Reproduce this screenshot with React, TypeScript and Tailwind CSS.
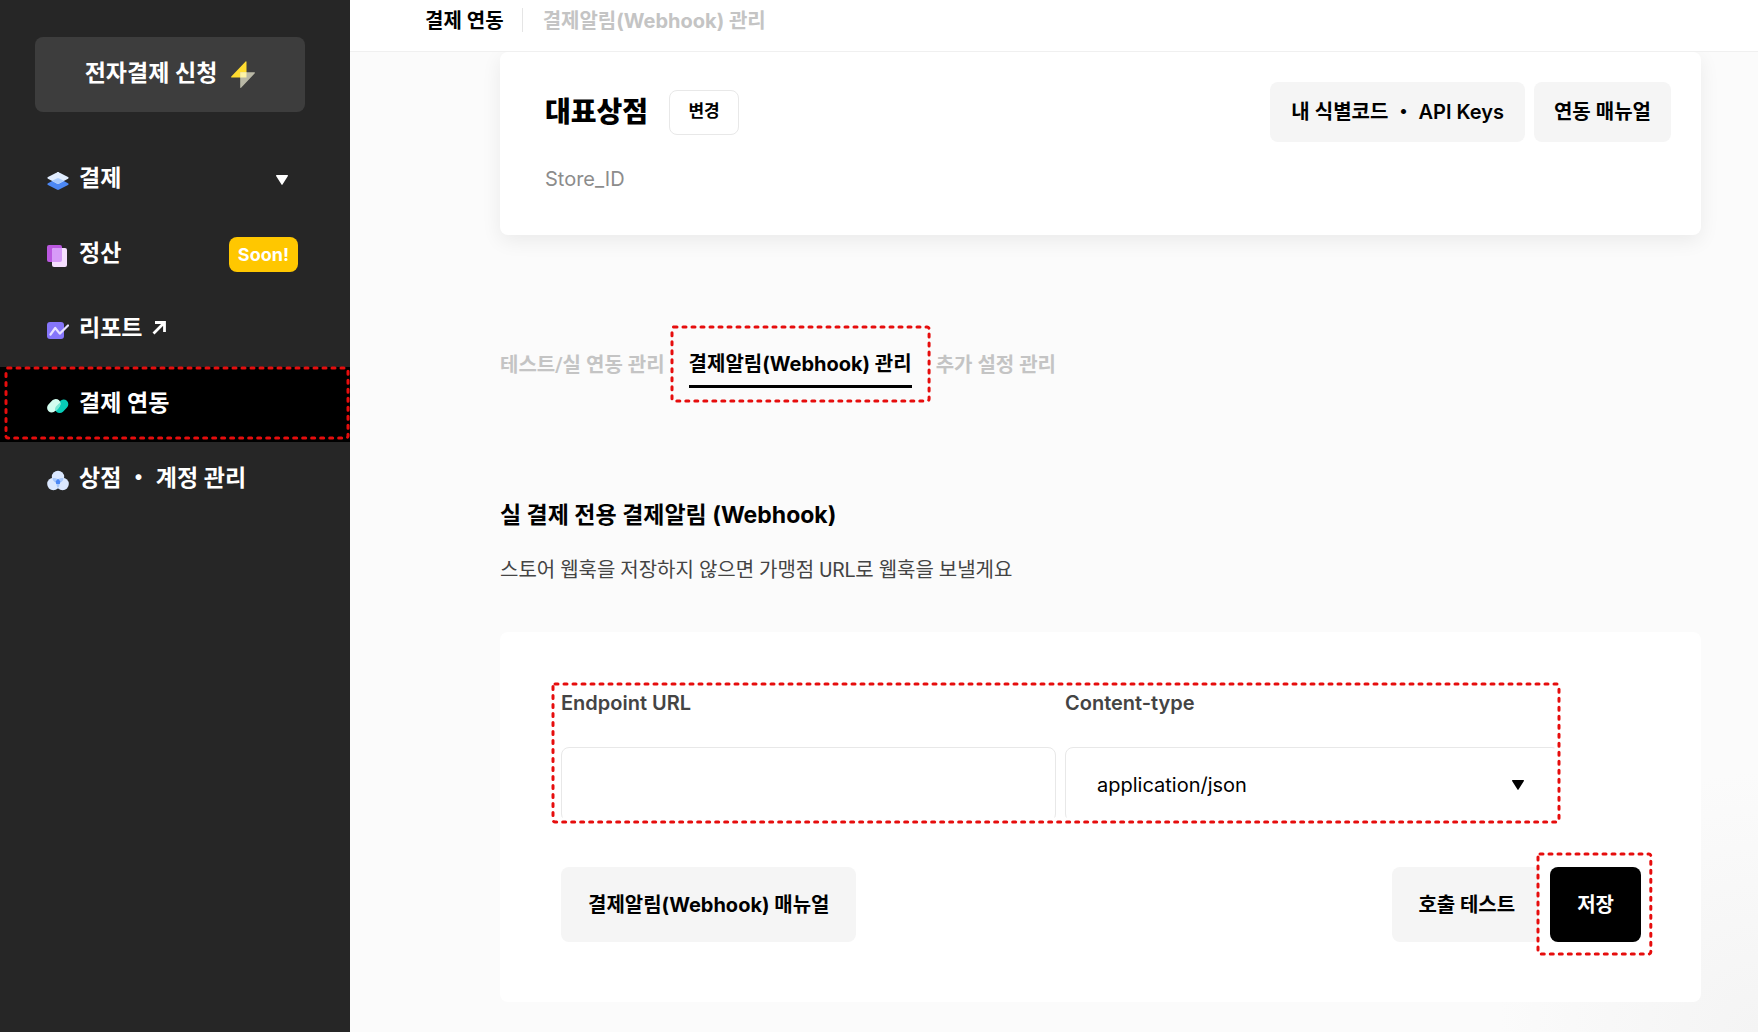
import { ReactNode } from "react";
import clsx from "clsx";

interface HighlightProps {
  className: string;
  fill?: string;
  halo?: boolean;
}

// Dashed red marker laid over (or behind) the thing it points at
function Highlight({ className, fill = "none", halo }: HighlightProps) {
  return (
    <div className={clsx("absolute pointer-events-none", className)} aria-hidden="true">
      <svg className="block h-full w-full overflow-visible">
        {halo && (
          <rect width="100%" height="100%" rx="3" fill="none" stroke="#ffffff" strokeWidth="9" />
        )}
        <rect
          width="100%"
          height="100%"
          rx="2"
          fill={fill}
          stroke="#e60d0d"
          strokeWidth="3"
          strokeLinecap="round"
          strokeDasharray="3 6"
        />
      </svg>
    </div>
  );
}

function Triangle({ className }: { className?: string }) {
  return (
    <svg viewBox="0 0 12 10" className={clsx("h-[10px] w-3", className)} fill="currentColor" aria-hidden="true">
      <path d="M0.6 0h10.8c.5 0 .7.5.5.9L6.5 9.6c-.2.4-.8.4-1 0L.1.9C-.1.5.1 0 .6 0z" />
    </svg>
  );
}

function BoltIcon() {
  return (
    <svg viewBox="0 0 24 27" className="h-[27px] w-6" aria-hidden="true">
      <path d="M14.6 0.4c.3-.4.9-.2.9.3V16.5H.7c-.6 0-.8-.6-.4-1z" fill="#ffdc30" />
      <path d="M9.2 11.2h14.2c.6 0 .8.6.4 1L10.1 26.7c-.3.4-.9.2-.9-.3z" fill="#b9b8a6" />
      <path d="M9.2 11.2h6.3v5.3H9.2z" fill="#fdf3a4" />
    </svg>
  );
}

function LayersIcon() {
  return (
    <svg viewBox="0 0 22 22" className="size-[22px]" aria-hidden="true">
      <path d="M1 13.3l8.8-4.7c.8-.4 1.6-.4 2.4 0l8.8 4.7c.9.5.9 1.1 0 1.6l-8.8 4.7c-.8.4-1.6.4-2.4 0L1 14.9c-.9-.5-.9-1.1 0-1.6z" fill="#4c88f5" />
      <path d="M1 7.1l8.8-4.7c.8-.4 1.6-.4 2.4 0L21 7.1c.9.5.9 1.1 0 1.6l-8.8 4.7c-.8.4-1.6.4-2.4 0L1 8.7c-.9-.5-.9-1.1 0-1.6z" fill="#e1edff" />
      <path d="M5 10.8l4.8-2.2c.8-.4 1.6-.4 2.4 0L17 10.8l-4.8 2.6c-.8.4-1.6.4-2.4 0z" fill="#a9cbfd" />
    </svg>
  );
}

function CardsIcon() {
  return (
    <svg viewBox="0 0 22 22" className="size-[22px]" aria-hidden="true">
      <rect x="0" y="0" width="15" height="17" rx="2" fill="#bb58e0" />
      <rect x="5" y="3" width="15" height="19" rx="2" fill="#f6dfff" />
      <path d="M5 5a2 2 0 0 1 2-2h8v12a2 2 0 0 1-2 2H5z" fill="#d79bf8" />
    </svg>
  );
}

function ReportIcon() {
  return (
    <svg viewBox="0 0 22 22" className="size-[22px]" aria-hidden="true">
      <rect x="0" y="2" width="17" height="17" rx="3" fill="#8575fa" />
      <path
        d="M3.5 14.5L8.2 8l4.6 5.6L21 5.5"
        fill="none"
        stroke="#e6e0ff"
        strokeWidth="2.2"
        strokeLinecap="round"
        strokeLinejoin="round"
      />
    </svg>
  );
}

function LinkIcon() {
  return (
    <svg viewBox="0 0 22 22" className="size-[22px]" aria-hidden="true">
      <g fill="none" strokeLinecap="round">
        <path d="M12.6 13.4l4-4.2" stroke="#07cdb8" strokeWidth="9.4" />
        <path d="M4.8 12.8l4-4.2" stroke="#d2fdf0" strokeWidth="9.4" />
      </g>
      <path d="M8 14.600c0-3.200 2.800-5 5.400-7.200.6 2.800-.8 5-4.400 8.600-.6-.2-1-.8-1-1.400z" fill="#7be8d5" />
    </svg>
  );
}

function CirclesIcon() {
  return (
    <svg viewBox="0 0 22 22" className="size-[22px]" aria-hidden="true">
      <circle cx="11" cy="7" r="6.200" fill="#dbe8ff" />
      <circle cx="6.400" cy="14" r="6.200" fill="#dbe8ff" />
      <circle cx="15.600" cy="14" r="6.200" fill="#dbe8ff" />
      <path d="M5.300 8.500c2.500-1 5 0 5.700 1.500.7-1.500 3.200-2.500 5.700-1.500-1 3-3 4.300-4.300 4.300.3 2 0 3.700-1.400 5.200-1.400-1.500-1.700-3.200-1.400-5.200-1.300 0-3.300-1.300-4.300-4.300z" fill="#a8c8fb" />
      <path d="M11 8.800l2.300 2.500-.5 2.700H9.200l-.5-2.700z" fill="#4c88f5" />
    </svg>
  );
}

function ExternalArrow() {
  return (
    <svg viewBox="0 0 14 14" className="size-[14px]" aria-hidden="true">
      <path d="M1.5 12.5L12 2M3 1.500h9.500V11" fill="none" stroke="currentColor" strokeWidth="2.800" />
    </svg>
  );
}

interface MenuItem {
  label: string;
  icon: ReactNode;
  extra?: ReactNode;
  external?: boolean;
  active?: boolean;
}

const MENU: MenuItem[] = [
  { label: "결제", icon: <LayersIcon />, extra: <Triangle className="mr-2.5" /> },
  {
    label: "정산",
    icon: <CardsIcon />,
    extra: (
      <span className="block rounded-lg bg-[#ffc700] px-[9px] font-['Inter',sans-serif] text-lg leading-[35px] font-bold">
        Soon!
      </span>
    ),
  },
  { label: "리포트", icon: <ReportIcon />, external: true },
  { label: "결제 연동", icon: <LinkIcon />, active: true },
  { label: "상점 ・ 계정 관리", icon: <CirclesIcon /> },
];

function Sidebar() {
  return (
    <aside className="w-[350px] shrink-0 bg-[#262626] pt-[37px] font-['Roboto','Noto_Sans_CJK_KR',sans-serif] text-white">
      <div className="pr-[45px] pl-[35px]">
        <button
          type="button"
          className="flex h-[75px] w-full items-center justify-center gap-3.5 rounded-lg bg-[#3d3d3d] text-[23px] font-bold"
        >
          전자결제 신청
          <BoltIcon />
        </button>
      </div>
      <nav className="mt-[30px]">
        {MENU.map((item) => (
          <a
            key={item.label}
            href="#"
            className={clsx(
              "relative flex h-[75px] items-center pr-[52px] pl-[47px] text-[23px] font-bold",
              item.active && "bg-black"
            )}
          >
            <span className="mt-0.5">{item.icon}</span>
            <span className="ml-2.5">{item.label}</span>
            {item.external && (
              <span className="mb-1 ml-2.5">
                <ExternalArrow />
              </span>
            )}
            {item.extra && <span className="ml-auto">{item.extra}</span>}
            {item.active && <Highlight className="top-px right-0.5 bottom-1 left-1.5" />}
          </a>
        ))}
      </nav>
    </aside>
  );
}

function GrayButton({ children, className }: { children: ReactNode; className: string }) {
  return (
    <button type="button" className={clsx("rounded-lg bg-[#f5f5f5] text-xl", className)}>
      {children}
    </button>
  );
}

function StoreCard() {
  return (
    <section className="flex h-[183px] items-start justify-between rounded-lg bg-white pt-[30px] pr-[30px] pl-[45px] shadow-[0_6px_20px_rgba(0,0,0,0.07)]">
      <div>
        <div className="flex h-[60px] items-center gap-[21px]">
          <h1 className="text-[28px] font-extrabold">대표상점</h1>
          <button
            type="button"
            className="h-[45px] w-[70px] rounded-lg border border-[#e8e8e8] bg-white text-[17px] font-semibold"
          >
            변경
          </button>
        </div>
        <p className="mt-[23px] text-xl text-[#8c8c8c]">Store_ID</p>
      </div>
      <div className="flex gap-[9px]">
        <GrayButton className="h-[60px] px-[21px] font-semibold">내 식별코드 ・ API Keys</GrayButton>
        <GrayButton className="h-[60px] px-5 font-semibold">연동 매뉴얼</GrayButton>
      </div>
    </section>
  );
}

function Tabs() {
  return (
    <div className="mt-[110px] flex gap-6 text-xl font-bold text-[#c4c4c4]">
      <button type="button" className="h-[43px] pb-1 font-['Roboto','Noto_Sans_CJK_KR',sans-serif]">
        테스트/실 연동 관리
      </button>
      <div className="relative">
        <button type="button" className="h-[43px] border-b-3 border-black pb-0.5 text-black">
          결제알림(Webhook) 관리
        </button>
        <Highlight className="-inset-x-[17px] -top-[18px] -bottom-[13px]" />
      </div>
      <button type="button" className="h-[43px] pb-1 font-['Roboto','Noto_Sans_CJK_KR',sans-serif]">
        추가 설정 관리
      </button>
    </div>
  );
}

function WebhookForm() {
  return (
    <form className="mt-12 rounded-lg bg-white pt-[54px] pr-[60px] pb-[60px] pl-[61px]">
      <div className="relative mr-[81px] grid grid-cols-2 gap-[9px]">
        <div>
          <label htmlFor="endpoint" className="block text-xl leading-[34px] font-semibold text-[#444]">
            Endpoint URL
          </label>
          <input
            id="endpoint"
            type="text"
            className="mt-[27px] h-[75px] w-full rounded-lg border border-[#e8e8e8] px-8 text-xl"
          />
        </div>
        <div>
          <label htmlFor="content-type" className="block text-xl leading-[34px] font-semibold text-[#444]">
            Content-type
          </label>
          <div className="relative mt-[27px]">
            <select
              id="content-type"
              className="h-[75px] w-full appearance-none rounded-lg border border-[#e8e8e8] bg-white px-[31px] text-xl"
            >
              <option>application/json</option>
              <option>application/x-www-form-urlencoded</option>
            </select>
            <Triangle className="pointer-events-none absolute top-[33px] right-9" />
          </div>
        </div>
        <Highlight className="-top-0.5 right-px bottom-0 -left-2" halo />
      </div>
      <div className="mt-[45px] flex">
        <GrayButton className="h-[75px] px-[27px] font-bold">결제알림(Webhook) 매뉴얼</GrayButton>
        <GrayButton className="ml-auto h-[75px] px-[26px] font-bold">호출 테스트</GrayButton>
        <div className="relative ml-[9px]">
          <Highlight className="-top-[13px] -right-2.5 -bottom-3 -left-3" fill="#ffffff" />
          <button type="submit" className="relative h-[75px] rounded-lg bg-black px-[27px] text-xl font-bold text-white">
            저장
          </button>
        </div>
      </div>
    </form>
  );
}

export default function App() {
  return (
    <div className="flex min-h-screen font-['Inter','Noto_Sans_CJK_KR',sans-serif] text-black">
      <Sidebar />
      <div className="flex min-w-0 flex-1 flex-col">
        <header className="relative z-10 flex h-[52px] items-start border-b border-[#f0f0f0] bg-white pt-[7px] pl-[75px] text-xl font-semibold">
          <span>결제 연동</span>
          <span className="mt-px ml-[18px] h-6 w-px bg-[#e5e5e5]" />
          <span className="ml-5 font-bold text-[#c4c4c4]">결제알림(Webhook) 관리</span>
        </header>
        <main className="flex-1 bg-[radial-gradient(circle_at_bottom_right,#f4f4f4,#fbfbfb_260px)] pr-[57px] pb-[30px] pl-[150px]">
          <StoreCard />
          <Tabs />
          <h2 className="mt-[111px] text-[23px] leading-8 font-bold">실 결제 전용 결제알림 (Webhook)</h2>
          <p className="mt-[25px] font-['Roboto','Noto_Sans_CJK_KR',sans-serif] text-xl text-[#444]">
            스토어 웹훅을 저장하지 않으면 가맹점 URL로 웹훅을 보낼게요
          </p>
          <WebhookForm />
        </main>
      </div>
    </div>
  );
}
